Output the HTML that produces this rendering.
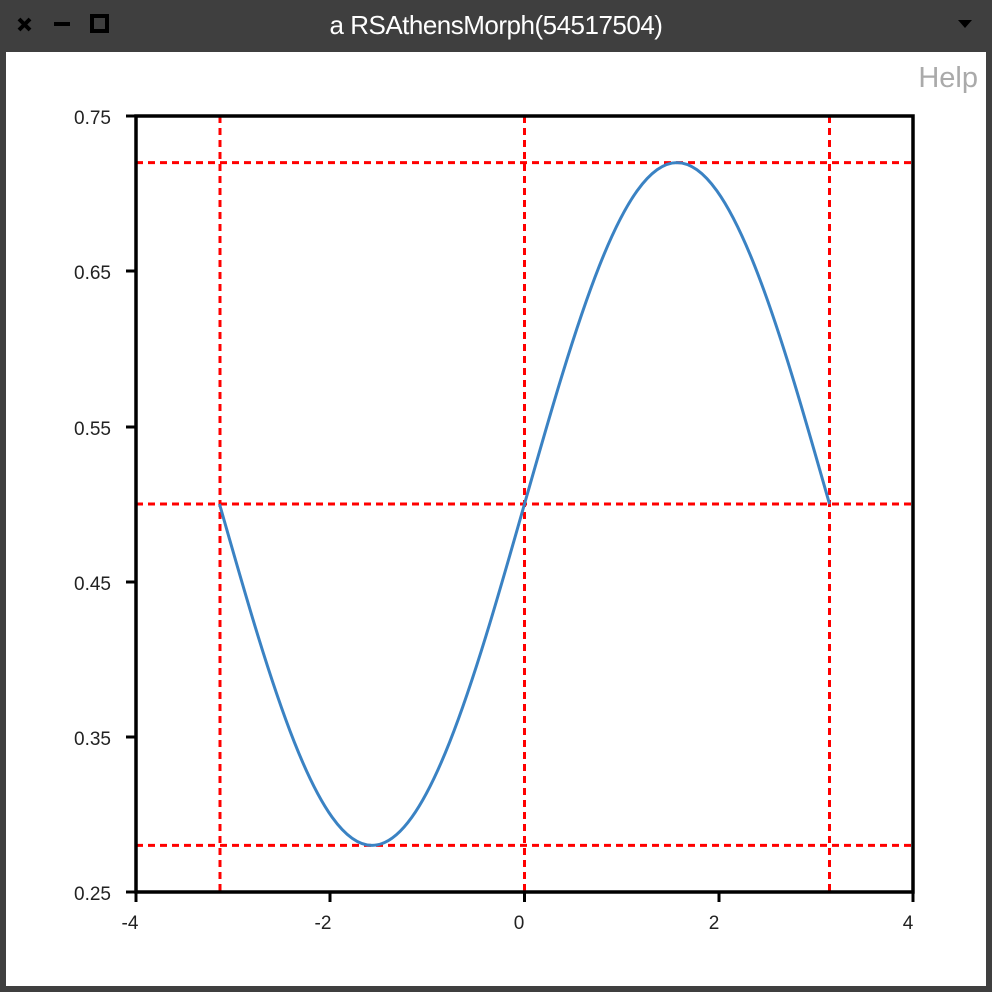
<!DOCTYPE html>
<html><head><style>
body{margin:0;width:992px;height:992px;background:#3f3f3f;overflow:hidden;font-family:"Liberation Sans",sans-serif}
.t{position:absolute;top:0;left:0;width:992px;height:52px;color:#fff;font-size:26px;text-align:center;line-height:50px;letter-spacing:-0.5px}
.w{position:absolute;left:6px;top:52px;width:980px;height:934px;background:#fff}
</style></head><body>
<div class="t">a RSAthensMorph(54517504)</div>
<svg style="position:absolute;left:0;top:0" width="992" height="52">
<path d="M19 19L30 30M30 19L19 30" stroke="#000" stroke-width="4"/>
<rect x="54" y="22" width="16" height="4" fill="#000"/>
<rect x="92" y="16" width="15" height="15" fill="none" stroke="#000" stroke-width="4"/>
<path d="M958 20L972 20L965 28Z" fill="#000"/>
</svg>
<div class="w"></div>
<svg style="position:absolute;left:0;top:0" width="992" height="992" font-family="Liberation Sans, sans-serif" font-size="19">
<text x="978" y="87" text-anchor="end" fill="#aaa" font-size="29">Help</text>
<g stroke="red" stroke-width="3" stroke-dasharray="7 5" fill="none">
<path d="M220 116V892M524.5 116V892M829.5 116V892M136 162.6H913M136 504H913M136 845.4H913"/>
</g>
<path d="M219.5 504C270.4 683.3 317.1 845.4 372 845.4C426.9 845.4 473.5 683.3 524.5 504C575.5 324.7 622.1 162.6 677 162.6C731.9 162.6 778.6 324.7 829.5 504" stroke="#3a82c3" stroke-width="3" fill="none"/>
<rect x="136" y="116" width="777" height="776" fill="none" stroke="#000" stroke-width="3.5"/>
<g stroke="#000" stroke-width="3">
<path d="M126 116H136M126 271H136M126 427H136M126 582H136M126 737H136M126 892H136M136 892V902M330 892V902M524.5 892V902M719 892V902M913 892V902"/>
</g>
<g text-anchor="end" fill="#222">
<text x="111" y="124">0.75</text><text x="111" y="279">0.65</text><text x="111" y="435">0.55</text><text x="111" y="590">0.45</text><text x="111" y="745">0.35</text><text x="111" y="900">0.25</text>
</g>
<g text-anchor="middle" fill="#222">
<text x="130" y="929">-4</text><text x="323" y="929">-2</text><text x="519" y="929">0</text><text x="714" y="929">2</text><text x="908" y="929">4</text>
</g>
</svg>
</body></html>
